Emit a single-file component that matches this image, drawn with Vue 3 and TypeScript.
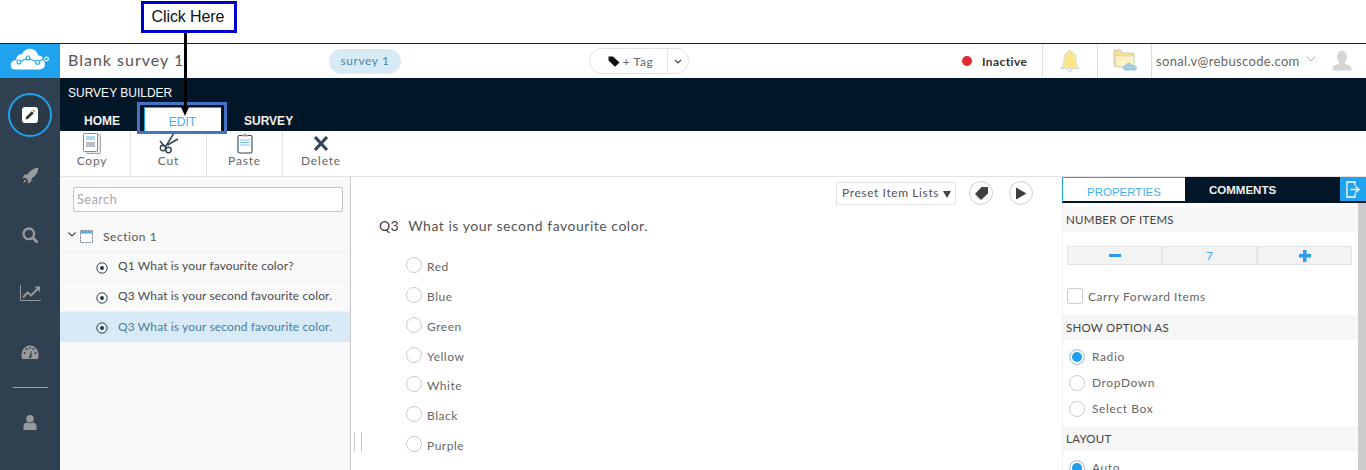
<script setup lang="ts">
const tools = [
  { name: 'Copy', icon: 'copy' },
  { name: 'Cut', icon: 'cut' },
  { name: 'Paste', icon: 'paste' },
  { name: 'Delete', icon: 'delete' },
]
const questions = [
  { text: 'Q1 What is your favourite color?', active: false },
  { text: 'Q3 What is your second favourite color.', active: false },
  { text: 'Q3 What is your second favourite color.', active: true },
]
const options = ['Red', 'Blue', 'Green', 'Yellow', 'White', 'Black', 'Purple']
</script>

<template>
  <div class="page">
    <div class="note-band">
      <div class="callout">Click Here</div>
    </div>
    <div class="arrow-line"></div>
    <div class="arrow-head"></div>
    <div class="edit-mark"></div>

    <div class="app">
      <aside class="rail">
        <div class="logo">
          <svg width="40" height="24" viewBox="0 0 40 24">
            <path d="M5 21.5 C1 21.5 0 18 1 15.5 C2 13 4 12 6.5 12 C6 8.5 9 5.5 12 6.5 C13.5 2 18 0 22 1 C25.5 2 27.5 4.5 28 7.5 C31 7 33.5 9.5 33 12.5 C35.5 13.5 35.5 19 33 20.5 C31.5 21.5 29 21.5 27 21.5 Z" fill="#fff" />
            <path d="M9 14 L18 10 L27.7 14.3 L33 11 L37 11" fill="none" stroke="#1fa3ef" stroke-width="1.1" />
            <circle cx="9" cy="14" r="2" fill="#fff" stroke="#1fa3ef" stroke-width="1.1" />
            <circle cx="18" cy="10" r="2" fill="#fff" stroke="#1fa3ef" stroke-width="1.1" />
            <circle cx="27.7" cy="14.3" r="2" fill="#fff" stroke="#1fa3ef" stroke-width="1.1" />
            <circle cx="36.5" cy="11" r="1.9" fill="#1fa3ef" stroke="#fff" stroke-width="1.1" />
          </svg>
        </div>
        <div class="rail-icons">
          <div class="rail-active">
            <svg width="16" height="16" viewBox="0 0 16 16">
              <rect width="16" height="16" rx="3" fill="#fff" />
              <path d="M3.5 12.5 L4.2 9.8 L9.8 4.2 L11.8 6.2 L6.2 11.8 Z" fill="#333" />
              <path d="M10.5 3.5 L11.5 2.6 L13.4 4.5 L12.5 5.5 Z" fill="#e8862e" />
            </svg>
          </div>
          <svg class="ri ri-rocket" width="17" height="17" viewBox="0 0 17 17">
            <path d="M16.5 0.5 C11.5 1 7.8 3.5 5.8 7.2 L2.5 7.8 L0.3 11 L3.8 10.8 L6.2 13.2 L6 16.7 L9.2 14.5 L9.8 11.2 C13.5 9.2 16 5.5 16.5 0.5 Z" fill="#9b9b9b" />
            <path d="M3 12.5 L0.8 16.2 L4.5 14 Z" fill="#9b9b9b" />
          </svg>
          <svg class="ri ri-search" width="16" height="16" viewBox="0 0 16 16">
            <circle cx="6.8" cy="6.8" r="5.3" fill="none" stroke="#999" stroke-width="2.4" />
            <path d="M10.8 10.8 L15 15" stroke="#999" stroke-width="2.8" stroke-linecap="round" />
          </svg>
          <svg class="ri ri-chart" width="21" height="16" viewBox="0 0 21 16">
            <path d="M0.5 0 V15.5 H21" fill="none" stroke="#999" stroke-width="1" />
            <path d="M3 12.5 L7.5 7.5 L11 10.5 L18 3.5" fill="none" stroke="#999" stroke-width="2" />
            <path d="M14.5 1.5 H20 V7 Z" fill="#999" />
          </svg>
          <svg class="ri ri-gauge" width="18" height="14" viewBox="0 0 18 14">
            <path d="M1 14 C-1 7 3 0.5 9 0.5 C15 0.5 19 7 17 14 Z" fill="#999" />
            <path d="M7.8 13 L10.5 5 L10.5 13 Z" fill="#2f4050" />
            <circle cx="3.6" cy="8" r="1" fill="#2f4050" />
            <circle cx="5.6" cy="4" r="1" fill="#2f4050" />
            <circle cx="9" cy="2.8" r="0.9" fill="#2f4050" />
            <circle cx="12.4" cy="4" r="1" fill="#2f4050" />
            <circle cx="14.5" cy="8" r="1" fill="#2f4050" />
          </svg>
          <div class="rail-rule"></div>
          <svg class="ri ri-user" width="14" height="15" viewBox="0 0 14 15">
            <ellipse cx="7" cy="3.8" rx="3.8" ry="3.8" fill="#999" />
            <path d="M0.5 15 V10.8 C0.5 8.8 2.5 7.6 4 7.2 C6 8.6 8 8.6 10 7.2 C11.5 7.6 13.5 8.8 13.5 10.8 V15 Z" fill="#999" />
          </svg>
        </div>
      </aside>

      <div class="work">
        <header class="topbar">
          <div class="title">Blank survey 1</div>
          <div class="chip">survey 1</div>
          <div class="tag">
            <div class="tag-main">
              <svg width="12" height="11" viewBox="0 0 12 11">
                <path d="M0.5 0.5 H5 L11.5 6.5 L7 10.8 L0.5 4.5 Z" fill="#111" />
              </svg>
              <span>+ Tag</span>
            </div>
            <div class="tag-caret">
              <svg width="8" height="5" viewBox="0 0 8 5"><path d="M1 1 L4 4 L7 1" fill="none" stroke="#444" stroke-width="1.1" /></svg>
            </div>
          </div>
          <div class="status"><i></i><span>Inactive</span></div>
          <div class="top-cell bell">
            <svg width="20" height="24" viewBox="0 0 20 24">
              <path d="M10 1 C11 1 11.5 2 11.5 3 C15 4 16 7 16 11 C16 15 17 17 19.5 19.5 H0.5 C3 17 4 15 4 11 C4 7 5 4 8.5 3 C8.5 2 9 1 10 1 Z" fill="#fde58a" stroke="#c9d6d8" stroke-width="0.8" />
              <path d="M8 20.5 C8.5 23 11.5 23 12 20.5" fill="none" stroke="#9cc6dc" stroke-width="1" />
            </svg>
          </div>
          <div class="top-cell folder">
            <svg width="24" height="22" viewBox="0 0 24 22">
              <path d="M1 1 V16 C1 17 2 18 3 18 H21 V4 H9 L7.5 1 Z" fill="#fbe08a" stroke="#b9c6c8" stroke-width="0.8" />
              <path d="M2 7 H21 V17.5 H3 Z" fill="#fdf2c2" stroke="#c7d1c5" stroke-width="0.6" />
              <path d="M12.5 21 C9.5 21 9.5 17 12.5 17 C13.5 13.5 17.5 13.5 18.5 16.5 C21.5 16 23.5 18 23.5 19.5 C23.5 21 22.5 21 21.5 21 Z" fill="#a5cfe8" stroke="#7fb1d0" stroke-width="0.7" />
            </svg>
          </div>
          <div class="user">
            <span class="mail">sonal.v@rebuscode.com</span>
            <svg class="user-caret" width="10" height="6" viewBox="0 0 10 6"><path d="M0.5 0.5 L5 5 L9.5 0.5" fill="none" stroke="#aaa" stroke-width="0.9" /></svg>
            <svg class="user-pic" width="20" height="22" viewBox="0 0 20 22">
              <ellipse cx="10" cy="7" rx="5" ry="6.5" fill="#d5d5d5" />
              <path d="M0.5 20.5 V18 C0.5 15.5 5 15 7.5 13 H12.5 C15 15 19.5 15.5 19.5 18 V20.5 Z" fill="#d5d5d5" />
            </svg>
          </div>
        </header>

        <nav class="ribbon">
          <div class="ribbon-title">SURVEY BUILDER</div>
          <div class="tabs">
            <div class="tab home">HOME</div>
            <div class="tab edit">EDIT</div>
            <div class="tab survey">SURVEY</div>
          </div>
        </nav>

        <div class="toolbar">
          <div v-for="t in tools" :key="t.name" class="tool" :class="'tool-' + t.icon">
            <svg v-if="t.icon === 'copy'" width="18" height="21" viewBox="0 0 18 21">
              <rect x="3.5" y="1.5" width="14" height="19" rx="1" fill="#eee" stroke="#99a3ab" />
              <rect x="0.5" y="0.5" width="14" height="18" rx="1" fill="#fff" stroke="#7f8b95" />
              <rect x="3" y="3" width="9" height="4" fill="#b3d9f1" />
              <rect x="3" y="9" width="9" height="5" fill="#b7bdc2" />
            </svg>
            <svg v-else-if="t.icon === 'cut'" width="20" height="21" viewBox="0 0 20 21">
              <path d="M7 13 L15 0 M6 14 L1 8" fill="none" stroke="#2f4152" stroke-width="1.5" />
              <path d="M8.5 12 L19 6" fill="none" stroke="#2f4152" stroke-width="1.5" />
              <circle cx="4" cy="15" r="2.7" fill="none" stroke="#2f4152" stroke-width="1.4" />
              <circle cx="9.5" cy="17" r="2.7" fill="none" stroke="#2f4152" stroke-width="1.4" />
            </svg>
            <svg v-else-if="t.icon === 'paste'" width="16" height="21" viewBox="0 0 16 21">
              <rect x="1" y="2.5" width="14" height="17.5" rx="1.5" fill="#fff" stroke="#33475a" stroke-width="1.1" />
              <path d="M5 3 L8 0.8 L11 3 Z" fill="#9aa5ae" stroke="#7f8b95" stroke-width="0.6" />
              <path d="M3 7 H13 M3 9.5 H13 M3 12 H13" stroke="#7dc3ee" stroke-width="1" />
            </svg>
            <svg v-else width="16" height="21" viewBox="0 0 16 21">
              <path d="M2 4 L14 17 M14 4 L2 17" stroke="#33475a" stroke-width="3.2" />
            </svg>
            <span>{{ t.name }}</span>
          </div>
        </div>

        <div class="panes">
          <section class="tree">
            <div class="search">Search</div>
            <div class="section-row">
              <svg class="chev" width="8" height="5" viewBox="0 0 8 5"><path d="M0.5 0.5 L4 4 L7.5 0.5" fill="none" stroke="#444" stroke-width="1.1" /></svg>
              <svg class="sec-ico" width="13" height="13" viewBox="0 0 13 13">
                <rect x="0.5" y="0.5" width="12" height="12" fill="#fff" stroke="#8b96a0" stroke-dasharray="3 0.6" />
                <rect x="1" y="1" width="11" height="2.6" fill="#5aaee0" />
              </svg>
              <span>Section 1</span>
            </div>
            <div v-for="(q, i) in questions" :key="i" class="q-row" :class="{ on: q.active }">
              <svg width="12" height="12" viewBox="0 0 12 12">
                <circle cx="6" cy="6" r="5.2" fill="none" stroke="#33475a" stroke-width="1" />
                <circle cx="6" cy="6" r="1.9" fill="#22303c" />
              </svg>
              <span>{{ q.text }}</span>
            </div>
          </section>

          <main class="canvas">
            <div class="canvas-tools">
              <div class="preset">Preset Item Lists <b></b></div>
              <div class="round">
                <svg width="15" height="15" viewBox="0 0 15 15">
                  <path d="M7.5 1 H14 V7.5 L7 14 L1 8 Z" fill="#3f3f3f" />
                  <path d="M5 14 L2 11" stroke="#bbb" stroke-width="0.8" />
                </svg>
              </div>
              <div class="round">
                <svg width="12" height="13" viewBox="0 0 12 13"><path d="M1 0.5 L11.5 6.5 L1 12.5 Z" fill="#3f3f3f" /></svg>
              </div>
            </div>
            <div class="q-head"><span class="q-no">Q3</span><span>What is your second favourite color.</span></div>
            <div class="opts">
              <div v-for="o in options" :key="o" class="opt"><i></i><span>{{ o }}</span></div>
            </div>
            <div class="grip"></div>
          </main>

          <aside class="props">
            <div class="prop-tabs">
              <div class="pt on">PROPERTIES</div>
              <div class="pt">COMMENTS</div>
              <div class="pt-exit">
                <svg width="15" height="17" viewBox="0 0 15 17">
                  <path d="M9 4.5 V1 H1 V16 H9 V12.5" fill="none" stroke="#fff" stroke-width="1.3" />
                  <path d="M4.5 8.5 H12 M9.5 5.5 L13 8.5 L9.5 11.5" fill="none" stroke="#fff" stroke-width="1.5" />
                </svg>
              </div>
            </div>
            <div class="prop-body">
              <div class="prop-col">
                <div class="ph ph-first">NUMBER OF ITEMS</div>
                <div class="stepper">
                  <div class="st"><em class="minus"></em></div>
                  <div class="st val">7</div>
                  <div class="st"><em class="plus"></em></div>
                </div>
                <div class="carry"><i></i><span>Carry Forward Items</span></div>
                <div class="ph">SHOW OPTION AS</div>
                <div class="radios">
                  <div class="rd sel"><i></i><span>Radio</span></div>
                  <div class="rd"><i></i><span>DropDown</span></div>
                  <div class="rd"><i></i><span>Select Box</span></div>
                </div>
                <div class="ph">LAYOUT</div>
                <div class="radios">
                  <div class="rd sel"><i></i><span>Auto</span></div>
                </div>
              </div>
              <div class="scroll"></div>
            </div>
          </aside>
        </div>
      </div>
    </div>
  </div>
</template>

<style>
html, body { margin: 0; background: #fff; }
</style>

<style scoped>
.page {
  position: relative;
  width: 1366px;
  height: 470px;
  overflow: hidden;
  background: #fff;
  font-family: Lato, "Open Sans", sans-serif;
  color: #555;
}
.note-band { padding: 1px 0 0 141px; box-sizing: border-box; border-bottom: 1px solid #222; height: 44px; }
.callout {
  width: 96px; height: 32px; box-sizing: border-box; border: 3px solid #0000cc;
  font: 16px/26px "Liberation Sans", sans-serif; color: #111; text-align: center; letter-spacing: -0.1px; padding-right: 2px;
}
.arrow-line { position: absolute; left: 184px; top: 33px; width: 3px; height: 76px; background: #000; z-index: 5; }
.arrow-head { position: absolute; left: 181px; top: 107px; border: 4.5px solid transparent; border-top: 9px solid #000; border-bottom: 0; z-index: 5; }
.edit-mark { position: absolute; left: 137px; top: 102px; width: 90px; height: 32px; box-sizing: border-box; border: 3px solid #4472c4; z-index: 4; }

.app { display: flex; height: 426px; }
.rail { width: 60px; flex: none; background: #2f4050; }
.logo { height: 34px; background: #1fa3ef; display: flex; align-items: flex-start; justify-content: center; padding-top: 4px; box-sizing: border-box; }
.rail-icons { display: flex; flex-direction: column; align-items: center; height: 392px; padding-top: 15px; box-sizing: border-box; }
.rail-active { width: 44px; height: 44px; box-sizing: border-box; border: 2px solid #1fa3ef; border-radius: 50%; background: #2b3a46; display: flex; align-items: center; justify-content: center; flex: none; }
.ri { display: block; flex: none; }
.ri-rocket { margin-top: 30px; }
.ri-search { margin-top: 43px; }
.ri-chart { margin-top: 42px; }
.ri-gauge { margin-top: 44px; }
.rail-rule { width: 35px; height: 1px; background: #9aa2a8; margin-top: 28px; flex: none; }
.ri-user { margin-top: 27px; }

.work { flex: 1; min-width: 0; display: flex; flex-direction: column; }
.topbar { height: 34px; flex: none; display: flex; align-items: center; background: #fff; }
.title { width: 269px; padding: 0 0 4px 8px; box-sizing: border-box; font-size: 16px; letter-spacing: 1px; color: #555; }
.chip { width: 72px; height: 25px; border-radius: 13px; background: #d8ebf5; color: #4d86a8; font-size: 12px; line-height: 23px; text-align: center; letter-spacing: .6px; }
.tag { margin-left: 188px; width: 100px; height: 26px; box-sizing: border-box; border: 1px solid #e3e3e3; border-radius: 13px; display: flex; align-items: center; }
.tag-main { width: 78px; display: flex; align-items: center; justify-content: center; gap: 3px; font-size: 12px; letter-spacing: .6px; color: #666; border-right: 1px solid #e3e3e3; height: 24px; padding-left: 4px; box-sizing: border-box; }
.tag-caret { flex: 1; display: flex; align-items: center; justify-content: center; }
.status { margin-left: 273px; width: 80px; display: flex; align-items: center; gap: 10px; font-size: 12px; letter-spacing: .4px; color: #333; }
.status i { width: 10px; height: 10px; border-radius: 50%; background: #e02a33; flex: none; }
.status span { font-weight: 700; }
.top-cell { height: 34px; box-sizing: border-box; border-left: 1px solid #ddd; display: flex; align-items: center; justify-content: center; flex: none; }
.bell { width: 55px; }
.folder { width: 54px; padding-bottom: 3px; }
.user { height: 34px; box-sizing: border-box; border-left: 1px solid #ddd; flex: 1; display: flex; align-items: center; padding-left: 4px; }
.mail { font-size: 13px; letter-spacing: .35px; color: #666; width: 143px; flex: none; white-space: nowrap; }
.user-caret { margin: -4px 0 0 7px; }
.user-pic { margin-left: 16px; }

.ribbon { height: 53px; flex: none; background: #011627; position: relative; }
.ribbon-title { padding: 8px 0 0 8px; font: 12px/14px "Liberation Sans", sans-serif; color: #fff; height: 29px; box-sizing: border-box; }
.tabs { display: flex; height: 24px; }
.tab { font: 700 12px/24px "Liberation Sans", sans-serif; color: #f1f1f1; padding-top: 2px; box-sizing: border-box; }
.home { margin-left: 24px; width: 60px; }
.edit { width: 77px; background: #fff; color: #3fb0f2; border-left: 1px solid #1fa3ef; border-top: 1px solid #1fa3ef; font-weight: 400; text-align: center; padding-right: 1px; }
.survey { margin-left: 23px; }

.toolbar { height: 46px; flex: none; display: flex; background: #fff; border-bottom: 1px solid #e3e3e3; box-sizing: border-box; }
.tool { width: 76px; display: flex; flex-direction: column; align-items: center; box-sizing: border-box; border-right: 1px solid #e3e3e3; font-size: 12px; letter-spacing: .8px; color: #666; padding-top: 2px; }
.tool svg { display: block; height: 21px; flex: none; }
.tool span { line-height: 15px; margin-top: -1px; }
.tool-copy { width: 71px; padding-right: 6px; }
.tool-delete { border-right: 0; }

.panes { flex: 1; min-height: 0; display: flex; }
.tree { width: 291px; flex: none; box-sizing: border-box; background: #f9f9f9; border-right: 1px solid #c8c8c8; padding-top: 10px; }
.search { width: 270px; height: 25px; margin-left: 13px; box-sizing: border-box; border: 1px solid #c4c4c4; border-radius: 2px; background: #fff; color: #aaa; font-size: 13px; line-height: 23px; padding-left: 3px; letter-spacing: .3px; }
.section-row { height: 40px; box-sizing: border-box; display: flex; align-items: center; padding: 10px 0 0 8px; border-bottom: 1px solid #f0f0f0; font-size: 12px; letter-spacing: .55px; color: #555; }
.chev { margin-top: -4px; }
.sec-ico { margin-left: 4px; }
.section-row span { margin-left: 10px; }
.q-row { height: 30px; box-sizing: border-box; display: flex; align-items: center; padding-left: 36px; border-bottom: 1px solid #f0f0f0; font-size: 12px; letter-spacing: .13px; color: #4c4c4c; }
.q-row svg { margin-top: 2px; flex: none; }
.q-row span { margin-left: 10px; white-space: nowrap; margin-top: -2px; }
.q-row.on { background: #d7eaf5; color: #4a7e9f; border-bottom: 0; }

.canvas { flex: 1; min-width: 0; position: relative; background: #fff; box-sizing: border-box; padding: 4px 0 0 28px; }
.canvas-tools { display: flex; align-items: center; height: 24px; padding-left: 457px; }
.preset { width: 120px; height: 23px; box-sizing: border-box; border: 1px solid #e3e3e3; border-radius: 2px; font-size: 12px; line-height: 19px; padding-left: 5px; letter-spacing: .6px; color: #555; white-space: nowrap; margin-right: 13px; }
.preset b { display: inline-block; border: 4px solid transparent; border-top: 7px solid #444; border-bottom: 0; vertical-align: -1px; }
.round { width: 24px; height: 24px; box-sizing: border-box; border: 1px solid #ccc; border-radius: 50%; display: flex; align-items: center; justify-content: center; margin-right: 16px; flex: none; }
.q-head { display: flex; gap: 9px; margin-top: 12px; font-size: 14px; line-height: 18px; letter-spacing: .52px; color: #555; white-space: nowrap; }
.q-no { color: #3c3c3c; letter-spacing: .4px; }
.opts { margin-top: 22px; padding-left: 27px; }
.opt { height: 29.85px; display: flex; align-items: flex-start; font-size: 12px; letter-spacing: .5px; color: #666; }
.opt i { width: 16px; height: 16px; box-sizing: border-box; border: 1px solid #ccc; border-radius: 50%; flex: none; }
.opt span { margin: 2px 0 0 5px; line-height: 16px; }
.grip { position: absolute; left: 3px; top: 255px; width: 6px; height: 20px; border-left: 1px solid #ccc; border-right: 1px solid #ccc; }

.props { width: 304px; flex: none; display: flex; flex-direction: column; background: #fff; }
.prop-tabs { height: 26px; flex: none; display: flex; background: #011627; position: relative; }
.pt { width: 154px; font: 700 11.5px/27px "Liberation Sans", sans-serif; color: #f1f1f1; padding-left: 24px; box-sizing: border-box; }
.pt.on { width: 123px; background: #fff; color: #3fb0f2; font-weight: 400; border: 1px solid #1fa3ef; border-right: 0; border-bottom: 2px solid #011627; padding-left: 24px; line-height: 28px; }
.pt-exit { width: 26px; height: 24px; background: #1fa3ef; margin-left: 1px; display: flex; align-items: center; justify-content: center; }
.prop-body { flex: 1; min-height: 0; display: flex; padding-top: 4px; overflow: hidden; border-left: 1px solid #eee; }
.prop-col { flex: 1; min-width: 0; }
.scroll { width: 8px; flex: none; background: #ccc; margin-top: -4px; }
.ph { height: 25px; background: #f6f6f6; font-size: 11.5px; line-height: 25px; padding-left: 3px; color: #444; letter-spacing: .25px; }
.stepper { display: flex; width: 285px; height: 19px; margin: 14px 0 0 4px; border: 1px solid #e3e3e3; box-sizing: border-box; background: #f3f3f3; }
.st { flex: 1; display: flex; align-items: center; justify-content: center; border-right: 2px solid #e6e6e6; color: #3fa9f0; font-size: 12px; }
.st:last-child { border-right: 0; }
.minus { width: 12px; height: 3px; background: #2a9df0; display: block; }
.plus { width: 12px; height: 12px; display: block; background: linear-gradient(#2a9df0, #2a9df0) center/12px 3.5px no-repeat, linear-gradient(#2a9df0, #2a9df0) center/3.5px 12px no-repeat; }
.carry { display: flex; align-items: center; height: 50px; padding: 12px 0 0 4px; box-sizing: border-box; font-size: 12px; letter-spacing: .55px; color: #666; }
.carry i { width: 16px; height: 16px; box-sizing: border-box; border: 1px solid #ccc; border-radius: 2px; margin-right: 5px; flex: none; }
.radios { padding: 9px 0 0 6px; height: 86px; box-sizing: border-box; }
.radios:last-child { height: auto; }
.rd { height: 26px; display: flex; align-items: flex-start; font-size: 12px; letter-spacing: .6px; color: #666; }
.rd i { width: 16px; height: 16px; box-sizing: border-box; border: 1px solid #ccc; border-radius: 50%; flex: none; margin-right: 7px; }
.rd span { line-height: 16px; }
.rd.sel i { background: #1f9df0; box-shadow: inset 0 0 0 2px #fff; }
</style>
